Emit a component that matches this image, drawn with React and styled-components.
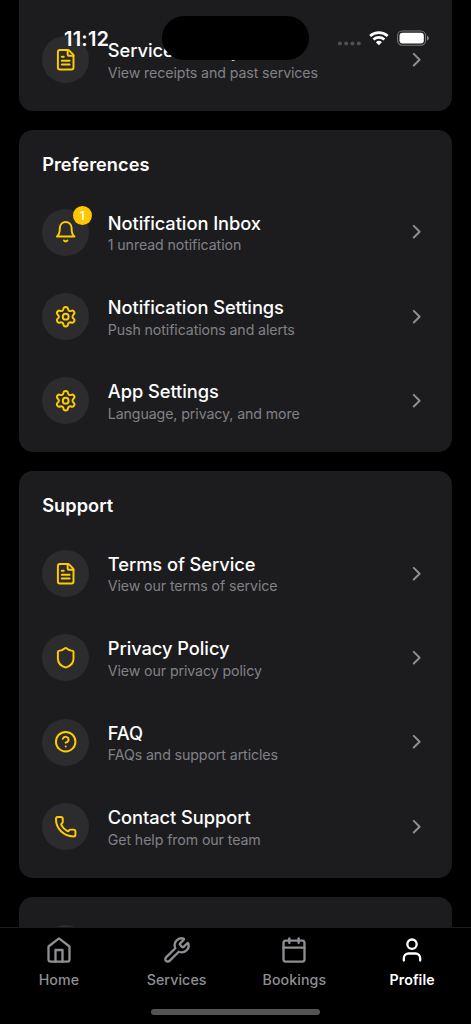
import styled, { createGlobalStyle } from 'styled-components';
import {
  Calendar,
  ChevronRight,
  CircleHelp,
  FileText,
  Phone,
  Settings,
  Shield,
  User,
  Wrench,
} from 'lucide-react';

const GlobalStyle = createGlobalStyle`
  * {
    box-sizing: border-box;
  }

  body {
    margin: 0;
    background: #000;
    font-family: Inter, 'Liberation Sans', sans-serif;
  }
`;

const Screen = styled.div`
  position: relative;
  display: flex;
  flex-direction: column;
  width: 471px;
  height: 1024px;
  overflow: hidden;
  background: #000;
`;

const Content = styled.main`
  display: flex;
  flex-direction: column;
  flex: 1;
  gap: 18.7px;
  min-height: 0;
  padding: 0 18.8px;
  overflow: hidden;
`;

const Card = styled.section`
  flex-shrink: 0;
  padding: ${props => (props.$titled ? '23.4px' : '9.4px')} 23.4px 9.4px;
  border-radius: 14px;
  background: #1c1c1e;

  &:first-child {
    padding-top: 17.3px;
    border-radius: 0 0 14px 14px;
  }
`;

const CardTitle = styled.h2`
  margin: 0 0 13.4px;
  font-size: 18.2px;
  font-weight: 600;
  line-height: 23.4px;
  letter-spacing: 0.05px;
  color: #fff;
`;

const Row = styled.div`
  display: flex;
  align-items: center;
  height: 84.35px;
`;

const IconCircle = styled.div`
  position: relative;
  display: flex;
  align-items: center;
  justify-content: center;
  flex-shrink: 0;
  width: 46.9px;
  height: 46.9px;
  margin-right: 18.7px;
  border-radius: 50%;
  background: #2c2c2e;
  color: #fc0;
`;

const Badge = styled.div`
  position: absolute;
  top: -2.5px;
  right: -2.5px;
  display: flex;
  align-items: center;
  justify-content: center;
  width: 18.8px;
  height: 18.8px;
  border-radius: 50%;
  background: #ffc800;
  font-size: 11.5px;
  font-weight: 600;
  color: #fff;
`;

const RowText = styled.div`
  flex: 1;
  padding-top: 2.8px;
`;

const RowTitle = styled.div`
  font-size: 18.3px;
  font-weight: 500;
  line-height: 22px;
  letter-spacing: -0.06px;
  color: #fff;
`;

const RowNote = styled.div`
  margin-top: 1.4px;
  font-size: 14.2px;
  line-height: 20px;
  letter-spacing: -0.1px;
  color: #818186;
`;

const Chevron = styled(ChevronRight)`
  color: #8e8e93;
`;

const StatusBar = styled.header`
  position: absolute;
  top: 0;
  left: 0;
  display: flex;
  width: 100%;
  padding: 16px 42px 0 64px;
`;

const Time = styled.div`
  width: 98px;
  padding-top: 11px;
  font-size: 20px;
  font-weight: 600;
  line-height: 24px;
  letter-spacing: 0.2px;
  color: #fff;
`;

const Island = styled.div`
  width: 147px;
  height: 43.5px;
  border-radius: 22px;
  background: #000;
`;

const StatusIcons = styled.div`
  display: flex;
  align-items: flex-start;
  justify-content: flex-end;
  flex: 1;
  padding-top: 14px;
`;

const Tabs = styled.nav`
  height: 97.5px;
  border-top: 1px solid #1c1c1e;
  background: #000;
`;

const TabList = styled.div`
  display: grid;
  grid-template-columns: repeat(4, 1fr);
  height: 81px;
`;

const Tab = styled.div`
  display: flex;
  flex-direction: column;
  align-items: center;
  gap: 6px;
  padding-top: 8.5px;
  font-size: 14.2px;
  font-weight: ${props => (props.$active ? 600 : 500)};
  line-height: 20px;
  letter-spacing: 0.1px;
  color: ${props => (props.$active ? '#fff' : '#8e8e93')};
`;

const HomeIndicator = styled.div`
  width: 169px;
  height: 6px;
  margin: 0 auto;
  border-radius: 3px;
  background: #545454;
`;

const LineIcon = styled.svg.attrs({ viewBox: '0 0 24 24' })`
  fill: none;
  stroke: currentColor;
  stroke-width: 2;
  stroke-linecap: round;
  stroke-linejoin: round;
`;

function BellIcon({ size }) {
  return (
    <LineIcon width={size} height={size}>
      <path d="M6 8a6 6 0 0 1 12 0c0 7 3 9 3 9H3s3-2 3-9" />
      <path d="M10.3 21a1.94 1.94 0 0 0 3.4 0" />
    </LineIcon>
  );
}

function HomeIcon({ size }) {
  return (
    <LineIcon width={size} height={size}>
      <path d="m3 9 9-7 9 7v11a2 2 0 0 1-2 2H5a2 2 0 0 1-2-2z" />
      <path d="M9 22V12h6v10" />
    </LineIcon>
  );
}

const preferences = [
  { icon: BellIcon, title: 'Notification Inbox', note: '1 unread notification', badge: 1 },
  { icon: Settings, title: 'Notification Settings', note: 'Push notifications and alerts' },
  { icon: Settings, title: 'App Settings', note: 'Language, privacy, and more' },
];

const support = [
  { icon: FileText, title: 'Terms of Service', note: 'View our terms of service' },
  { icon: Shield, title: 'Privacy Policy', note: 'View our privacy policy' },
  { icon: CircleHelp, title: 'FAQ', note: 'FAQs and support articles' },
  { icon: Phone, title: 'Contact Support', note: 'Get help from our team' },
];

const tabs = [
  { icon: HomeIcon, label: 'Home' },
  { icon: Wrench, label: 'Services' },
  { icon: Calendar, label: 'Bookings' },
  { icon: User, label: 'Profile', active: true },
];

function MenuRow({ icon: Icon, title, note, badge }) {
  return (
    <Row>
      <IconCircle>
        <Icon size={23.4} />
        {badge && <Badge>{badge}</Badge>}
      </IconCircle>
      <RowText>
        <RowTitle>{title}</RowTitle>
        <RowNote>{note}</RowNote>
      </RowText>
      <Chevron size={23.4} />
    </Row>
  );
}

function MenuCard({ title, items }) {
  return (
    <Card $titled>
      <CardTitle>{title}</CardTitle>
      {items.map(item => (
        <MenuRow key={item.title} {...item} />
      ))}
    </Card>
  );
}

function SystemIcons() {
  return (
    <StatusIcons>
      <svg width="92" height="18" viewBox="0 0 92 18">
        <g fill="#505053">
          <circle cx="2.9" cy="13.4" r="2" />
          <circle cx="9.2" cy="13.4" r="2" />
          <circle cx="15.5" cy="13.4" r="2" />
          <circle cx="21.8" cy="13.4" r="2" />
        </g>
        <g fill="none" stroke="#fff" strokeWidth="2.7">
          <path d="M33.1 6a13.2 13.2 0 0 1 17.6 0" />
          <path d="M36.4 9.5a8.3 8.3 0 0 1 11 0" />
        </g>
        <path d="M41.9 15.3l-3-3.1a4.5 4.5 0 0 1 6 0z" fill="#fff" />
        <rect x="60.6" y="1" width="28" height="14.2" rx="4.6" fill="none" stroke="#77777a" strokeWidth="1.1" />
        <rect x="62.5" y="2.8" width="24.3" height="10.6" rx="3" fill="#fff" />
        <path d="M90 5.8a2.5 2.5 0 0 1 0 4.8z" fill="#88888a" />
      </svg>
    </StatusIcons>
  );
}

export default function App() {
  return (
    <Screen>
      <GlobalStyle />
      <Content>
        <Card>
          <MenuRow icon={FileText} title="Service History" note="View receipts and past services" />
        </Card>
        <MenuCard title="Preferences" items={preferences} />
        <MenuCard title="Support" items={support} />
        <Card>
          <Row>
            <IconCircle />
          </Row>
        </Card>
      </Content>

      <Tabs>
        <TabList>
          {tabs.map(({ icon: Icon, label, active }) => (
            <Tab key={label} $active={active}>
              <Icon size={28} />
              {label}
            </Tab>
          ))}
        </TabList>
        <HomeIndicator />
      </Tabs>

      <StatusBar>
        <Time>11:12</Time>
        <Island />
        <SystemIcons />
      </StatusBar>
    </Screen>
  );
}
